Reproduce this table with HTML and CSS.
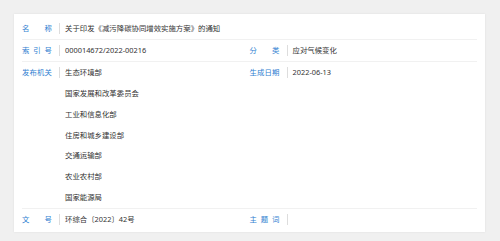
FILE: index.html
```html
<!DOCTYPE html>
<html lang="zh">
<head>
<meta charset="utf-8">
<title>信息公开</title>
<link rel="stylesheet" href="styles.css">
</head>
<body>
<div class="card">
  <div class="row">
    <div class="field full">
      <span class="label">名称</span><span class="sep"></span>
      <div class="value">关于印发《减污降碳协同增效实施方案》的通知</div>
    </div>
  </div>
  <div class="row">
    <div class="field">
      <span class="label">索引号</span><span class="sep"></span>
      <div class="value">000014672/2022-00216</div>
    </div>
    <div class="field">
      <span class="label">分类</span><span class="sep"></span>
      <div class="value">应对气候变化</div>
    </div>
  </div>
  <div class="row">
    <div class="field">
      <span class="label">发布机关</span><span class="sep"></span>
      <div class="value list">
        <div>生态环境部</div>
        <div>国家发展和改革委员会</div>
        <div>工业和信息化部</div>
        <div>住房和城乡建设部</div>
        <div>交通运输部</div>
        <div>农业农村部</div>
        <div>国家能源局</div>
      </div>
    </div>
    <div class="field">
      <span class="label">生成日期</span><span class="sep"></span>
      <div class="value">2022-06-13</div>
    </div>
  </div>
  <div class="row last">
    <div class="field">
      <span class="label">文号</span><span class="sep"></span>
      <div class="value">环综合〔2022〕42号</div>
    </div>
    <div class="field">
      <span class="label">主题词</span><span class="sep"></span>
      <div class="value"></div>
    </div>
  </div>
</div>
</body>
</html>
```
FILE: styles.css
```css
html, body {
  margin: 0;
  padding: 0;
  background: #f0f0f0;
}
body {
  padding: 14px 15px 9px 14px;
  font-family: "Noto Sans", "Noto Sans CJK SC", sans-serif;
  font-size: 7.4px;
  color: #333;
}
.card {
  background: #fff;
  box-shadow: 0 0 2px rgba(0, 0, 0, 0.08);
  padding: 4px 8px 2px 8px;
}
.row {
  display: flex;
  border-bottom: 1px solid #f1f1f1;
}
.row.last {
  border-bottom: none;
}
.field {
  flex: 1 1 0;
  display: flex;
  align-items: flex-start;
  line-height: 20.86px;
  min-height: 21px;
}
.label {
  width: 30px;
  color: #2f80d1;
  text-align: justify;
  text-align-last: justify;
  flex: none;
}
.sep {
  flex: none;
  width: 1px;
  height: 11px;
  background: #dddddd;
  margin: 5px 5px 0 7px;
}
.value {
  flex: 1;
}
```
